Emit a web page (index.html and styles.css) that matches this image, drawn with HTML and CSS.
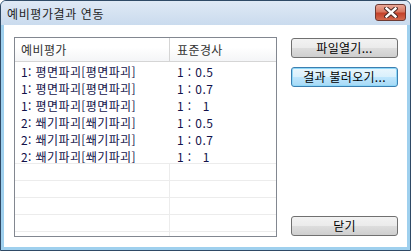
FILE: index.html
```html
<!DOCTYPE html>
<html lang="ko">
<head>
  <meta charset="UTF-8" />
  <title>예비평가결과 연동</title>
  <link rel="stylesheet" href="styles.css">
</head>
<body>

  <div class="window">
    <div class="titlebar">
      <span class="title">예비평가결과 연동</span>
      <button class="close-btn" title="닫기">
        <svg width="14" height="11" viewBox="0 0 14 11">
          <path d="M2.5 1.5 L11.5 9.5 M11.5 1.5 L2.5 9.5" stroke="#4a2a26" stroke-width="4.4" stroke-linecap="square"/>
          <path d="M2.5 1.5 L11.5 9.5 M11.5 1.5 L2.5 9.5" stroke="#fff" stroke-width="2.4" stroke-linecap="square"/>
        </svg>
      </button>
    </div>

    <div class="client">
      <div class="grid">
        <div class="grid-header">
          <div class="col1">예비평가</div>
          <div class="col2">표준경사</div>
        </div>
        <div class="row"><div class="col1">1: 평면파괴[평면파괴]</div><div class="col2">1 : 0.5</div></div>
        <div class="row"><div class="col1">1: 평면파괴[평면파괴]</div><div class="col2">1 : 0.7</div></div>
        <div class="row"><div class="col1">1: 평면파괴[평면파괴]</div><div class="col2">1 :   1</div></div>
        <div class="row"><div class="col1">2: 쐐기파괴[쐐기파괴]</div><div class="col2">1 : 0.5</div></div>
        <div class="row"><div class="col1">2: 쐐기파괴[쐐기파괴]</div><div class="col2">1 : 0.7</div></div>
        <div class="row last"><div class="col1">2: 쐐기파괴[쐐기파괴]</div><div class="col2">1 :   1</div></div>
        <div class="row empty"><div class="col1"></div><div class="col2"></div></div>
        <div class="row empty"><div class="col1"></div><div class="col2"></div></div>
        <div class="row empty"><div class="col1"></div><div class="col2"></div></div>
        <div class="row empty"><div class="col1"></div><div class="col2"></div></div>
        <div class="row empty"><div class="col1"></div><div class="col2"></div></div>
      </div>

      <div class="actions">
        <button class="btn">파일열기...</button>
        <button class="btn focused">결과 불러오기...</button>
        <button class="btn btn-close">닫기</button>
      </div>
    </div>
  </div>

</body>
</html>
```

FILE: styles.css
```css
body {
  margin: 0;
  background: #fff;
  font-family: "Noto Sans CJK KR", "Noto Sans", sans-serif;
  font-size: 12px;
  color: #000;
}
.window {
  box-sizing: border-box;
  width: 411px;
  height: 251px;
  border: 1px solid #2f4a66;
  border-radius: 6px 6px 0 0;
  background: #9fd0ee;
  display: flex;
  flex-direction: column;
  overflow: hidden;
}
.titlebar {
  height: 24px;
  display: flex;
  align-items: center;
  justify-content: space-between;
  padding: 0 4px 0 6px;
  background: linear-gradient(#dfe9f5, #cadbee);
}
.title {
  font-size: 12px;
  color: #1e1e1e;
  line-height: 14px;
  padding-top: 1px;
  letter-spacing: 0.6px;
}
.close-btn {
  box-sizing: border-box;
  width: 31px;
  height: 17px;
  margin-top: -2px;
  padding: 0;
  border: 1px solid #6e3a33;
  border-radius: 3px;
  background: linear-gradient(#eaa797 0%, #d87862 45%, #c4412a 55%, #d2694f 100%);
  display: flex;
  align-items: center;
  justify-content: center;
}
.client {
  flex: 1;
  margin: 0 3px 3px 3px;
  background: #fff;
  display: flex;
  padding: 12px 9px 10px 10px;
}
.grid {
  box-sizing: border-box;
  width: 263px;
  height: 200px;
  border: 1px solid #828790;
  overflow: hidden;
  background: #fff;
}
.grid-header {
  display: flex;
  height: 23px;
  border-bottom: 1px solid #d5d5d5;
  background: linear-gradient(#ffffff 0%, #ffffff 40%, #f4f5f7 100%);
  color: #333;
}
.grid-header .col1,
.grid-header .col2 {
  line-height: 23px;
  letter-spacing: 0.4px;
}
.grid-header .col1 {
  border-right: 1px solid #d5d5d5;
}
.col1 {
  box-sizing: border-box;
  width: 155px;
  padding-left: 6px;
  white-space: pre;
}
.col2 {
  flex: 1;
  padding-left: 7px;
  white-space: pre;
}
.row {
  display: flex;
  height: 17px;
  line-height: 17px;
  color: #12124a;
}
.row .col1,
.row .col2 {
  padding-top: 1px;
  line-height: 17px;
  letter-spacing: 0.4px;
}
.row.last,
.row.empty {
  border-bottom: 1px solid #ececec;
  height: 16px;
}
.row.empty .col1 {
  border-right: 1px solid #ececec;
}
.actions {
  display: flex;
  flex-direction: column;
  gap: 9px;
  width: 107px;
  margin-left: 14px;
  padding-top: 1px;
  padding-bottom: 1px;
}
.btn {
  box-sizing: border-box;
  height: 20px;
  padding: 0;
  border: 1px solid #707070;
  border-radius: 3px;
  background: linear-gradient(#f2f2f2 0%, #ebebeb 49%, #dddddd 50%, #cfcfcf 100%);
  font-family: "Noto Sans CJK KR", "Noto Sans", sans-serif;
  font-size: 12px;
  color: #000;
  line-height: 16px;
  letter-spacing: 0.3px;
  cursor: pointer;
}
.btn.focused {
  border-color: #3c7fb1;
  box-shadow: inset 0 0 0 1px #8fd8f8;
  background: linear-gradient(#eaf6fd 0%, #d9f0fc 49%, #bee6fd 50%, #a7d9f5 100%);
}
.btn-close {
  margin-top: auto;
}
```
